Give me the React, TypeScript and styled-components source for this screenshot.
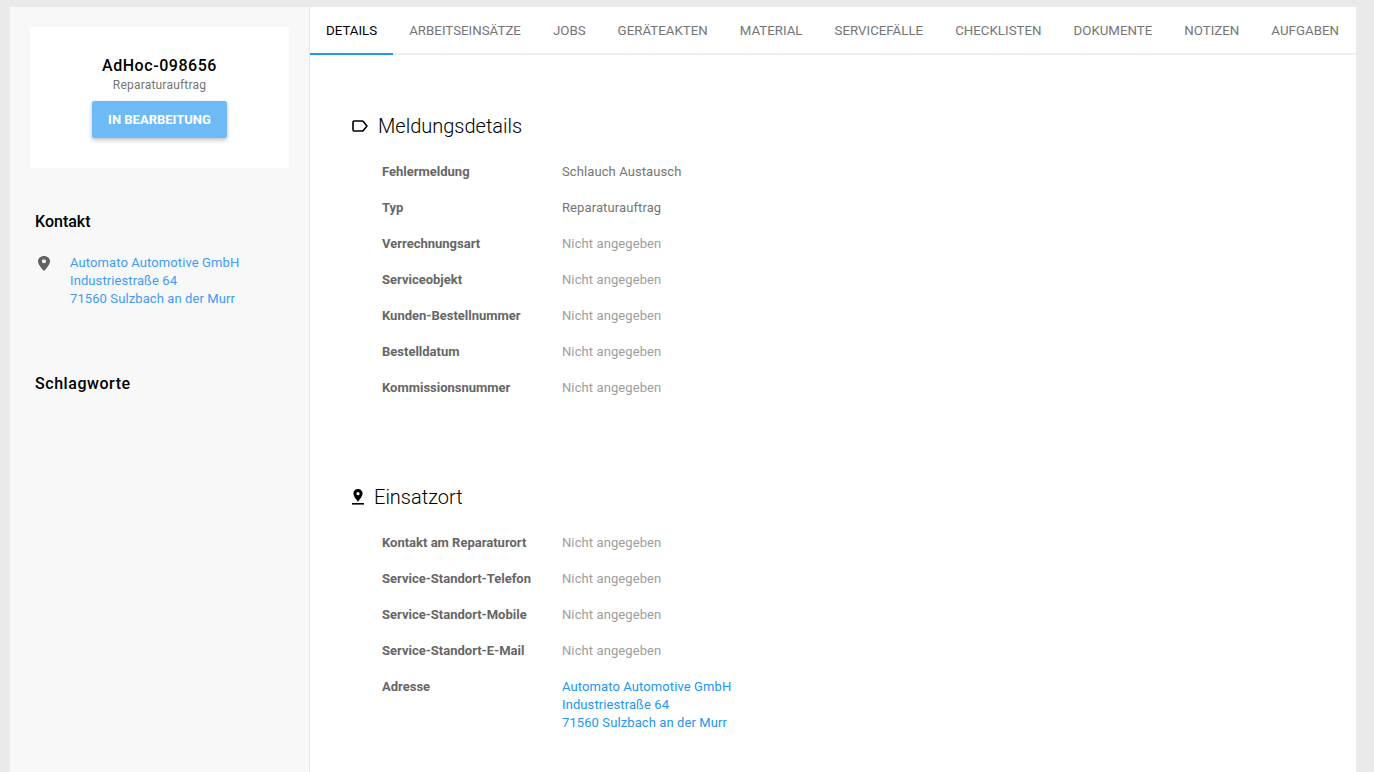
import React from "react";
import styled, { createGlobalStyle } from "styled-components";

const Global = createGlobalStyle`
  html, body { margin: 0; padding: 0; height: 100%; overflow: hidden; background: #eaeaea; }
  body { font-family: Roboto, "Liberation Sans", sans-serif; }
`;

const Page = styled.div`
  box-sizing: border-box;
  width: 1374px;
  height: 772px;
  padding: 7px 18px 0 10px;
  overflow: hidden;
`;
const Shell = styled.div`
  display: flex;
  height: 765px;
`;
const Sidebar = styled.aside`
  box-sizing: border-box;
  width: 300px;
  flex: none;
  background: #f8f8f8;
  border-right: 1px solid #e6e6e6;
  padding: 20px 20px 0 20px;
`;
const Card = styled.div`
  box-sizing: border-box;
  width: 259px;
  height: 141px;
  background: #fff;
  display: flex;
  flex-direction: column;
  align-items: center;
  padding-top: 29px;
`;
const Title = styled.div`
  font-size: 16px;
  font-weight: 500;
  line-height: 20px;
  color: #000;
  letter-spacing: 0.55px;
`;
const Subtitle = styled.div`
  font-size: 12px;
  line-height: 19px;
  color: #757575;
  letter-spacing: 0.2px;
`;
const StatusButton = styled.div`
  margin-top: 6px;
  width: 135px;
  height: 37px;
  border-radius: 2px;
  background: #6ebaf7;
  color: #fff;
  font-size: 13px;
  font-weight: 700;
  display: flex;
  align-items: center;
  justify-content: center;
  box-shadow: 0 2px 4px rgba(0, 0, 0, 0.25);
`;
const SideHeading = styled.h3<{ $top: number; $spacing?: number }>`
  margin: ${(p) => p.$top}px 0 0 5px;
  font-size: 16px;
  font-weight: 500;
  line-height: 20px;
  color: #000;
  letter-spacing: ${(p) => p.$spacing ?? 0}px;
`;
const ContactRow = styled.div`
  display: flex;
  margin-top: 22px;
  padding-left: 5px;
`;
const PinSlot = styled.div`
  width: 35px;
  flex: none;
  height: 18px;
  svg { display: block; margin: 2px 0 0 3px; }
`;
const LinkBlock = styled.div`
  font-size: 13px;
  line-height: 18px;
  color: #2196f3;
  letter-spacing: 0.1px;
`;
const SideLink = styled(LinkBlock)`
  color: #3f9bf5;
`;
const Main = styled.main`
  flex: 1;
  min-width: 0;
  background: #fff;
`;
const Tabs = styled.nav`
  display: flex;
  height: 46px;
  border-bottom: 2px solid #eeeeee;
`;
const Tab = styled.div<{ $active?: boolean }>`
  position: relative;
  padding: 0 16px;
  font-size: 13.3px;
  font-weight: 400;
  line-height: 48px;
  white-space: nowrap;
  color: ${(p) => (p.$active ? "#000" : "#757575")};
  ${(p) =>
    p.$active &&
    `&::after { content: ""; position: absolute; left: 0; right: 0; bottom: -2px; height: 2px; background: #2196f3; }`}
`;
const Section = styled.section<{ $top: number }>`
  margin: ${(p) => p.$top}px 0 0 42px;
`;
const SectionHead = styled.div`
  display: flex;
  align-items: center;
  gap: 10px;
  height: 28px;
  margin-bottom: 23px;
  font-size: 20px;
  font-weight: 300;
  color: #000;
`;
const Row = styled.div`
  display: flex;
  padding-left: 30px;
  min-height: 18px;
  margin-bottom: 18px;
  font-size: 13px;
  line-height: 18px;
`;
const Label = styled.div`
  width: 180px;
  flex: none;
  font-weight: 700;
  color: #666;
`;
const Value = styled.div<{ $muted?: boolean }>`
  color: ${(p) => (p.$muted ? "#9e9e9e" : "#757575")};
  letter-spacing: 0.1px;
`;

const Pin = () => (
  <svg width="12" height="15" viewBox="5 2 14 20" preserveAspectRatio="none" fill="#616161">
    <path d="M12 2C8.13 2 5 5.130 5 9c0 5.250 7 13 7 13s7-7.750 7-13c0-3.870-3.130-7-7-7zm0 9.500a2.500 2.500 0 1 1 0-5 2.500 2.500 0 0 1 0 5z" />
  </svg>
);
const PinDrop = () => (
  <svg width="12" height="16" viewBox="0 0 12 16">
    <path
      fillRule="evenodd"
      d="M6 0C3.200 0 1.400 2.200 1.400 4.600 1.400 7.600 6 12.700 6 12.700s4.600-5.100 4.600-8.100C10.600 2.200 8.800 0 6 0zm0 6.300a1.600 1.600 0 1 1 0-3.200 1.600 1.600 0 0 1 0 3.200z"
      fill="#000"
    />
    <rect x="0" y="14" width="12" height="1.600" fill="#000" />
  </svg>
);
const LabelOutline = () => (
  <svg width="16" height="14" viewBox="0 0 16 14" fill="none">
    <path
      d="M2 2h8.300c.4 0 .8.200 1 .5L14.900 7l-3.600 4.500c-.2.300-.6.500-1 .5H2a1 1 0 0 1-1-1V3a1 1 0 0 1 1-1z"
      stroke="#000"
      strokeWidth="1.600"
    />
  </svg>
);

const tabs = ["DETAILS", "ARBEITSEINSÄTZE", "JOBS", "GERÄTEAKTEN", "MATERIAL", "SERVICEFÄLLE", "CHECKLISTEN", "DOKUMENTE", "NOTIZEN", "AUFGABEN"];
const NA = "Nicht angegeben";
const details: [string, string, boolean][] = [
  ["Fehlermeldung", "Schlauch Austausch", false],
  ["Typ", "Reparaturauftrag", false],
  ["Verrechnungsart", NA, true],
  ["Serviceobjekt", NA, true],
  ["Kunden-Bestellnummer", NA, true],
  ["Bestelldatum", NA, true],
  ["Kommissionsnummer", NA, true],
];
const place = ["Kontakt am Reparaturort", "Service-Standort-Telefon", "Service-Standort-Mobile", "Service-Standort-E-Mail"];
const Address = () => (
  <>
    Automato Automotive GmbH
    <br />
    Industriestraße 64
    <br />
    71560 Sulzbach an der Murr
  </>
);

export default function App() {
  return (
    <Page>
      <Global />
      <Shell>
        <Sidebar>
          <Card>
            <Title>AdHoc-098656</Title>
            <Subtitle>Reparaturauftrag</Subtitle>
            <StatusButton>IN BEARBEITUNG</StatusButton>
          </Card>
          <SideHeading $top={44}>Kontakt</SideHeading>
          <ContactRow>
            <PinSlot>
              <Pin />
            </PinSlot>
            <SideLink>
              <Address />
            </SideLink>
          </ContactRow>
          <SideHeading $top={66} $spacing={0.55}>
            Schlagworte
          </SideHeading>
        </Sidebar>
        <Main>
          <Tabs>
            {tabs.map((t, i) => (
              <Tab key={t} $active={i === 0}>
                {t}
              </Tab>
            ))}
          </Tabs>
          <Section $top={57}>
            <SectionHead>
              <LabelOutline />
              Meldungsdetails
            </SectionHead>
            {details.map(([l, v, m]) => (
              <Row key={l}>
                <Label>{l}</Label>
                <Value $muted={m}>{v}</Value>
              </Row>
            ))}
          </Section>
          <Section $top={86}>
            <SectionHead>
              <PinDrop />
              Einsatzort
            </SectionHead>
            {place.map((l) => (
              <Row key={l}>
                <Label>{l}</Label>
                <Value $muted>{NA}</Value>
              </Row>
            ))}
            <Row>
              <Label>Adresse</Label>
              <LinkBlock>
                <Address />
              </LinkBlock>
            </Row>
          </Section>
        </Main>
      </Shell>
    </Page>
  );
}
